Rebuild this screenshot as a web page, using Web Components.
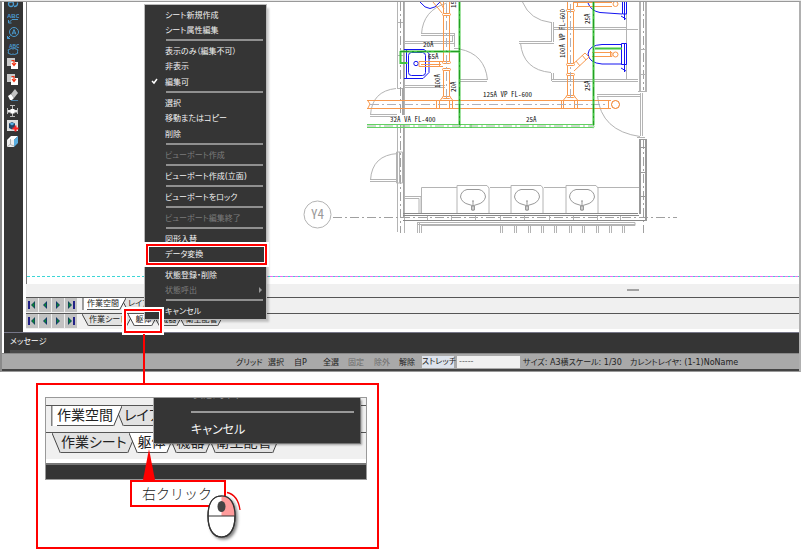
<!DOCTYPE html>
<html lang="ja">
<head>
<meta charset="utf-8">
<title>CAD</title>
<style>
body{margin:0;background:#fff;font-family:"DejaVu Sans","Noto Sans CJK JP",sans-serif;font-size:8px;font-feature-settings:"palt";}
</style>
</head>
<body>
<manual-page></manual-page>
<script>
const define = (name, html, setup) => {
  const t = document.createElement('template');
  t.innerHTML = html;
  customElements.define(name, class extends HTMLElement {
    constructor(){ super(); this.attachShadow({mode:'open'}).append(t.content.cloneNode(true)); }
    connectedCallback(){ if(setup) setup(this, this.shadowRoot); }
  });
};

/* ---------- tool bar ---------- */
const pages = `<path d="M0 0h8v8H0z" fill="#c9c9c9"/><path d="M4 4h7v7H4z" fill="#fff"/><path d="M4.500 2.500h2.500v4M5 5l2 2.500L9 5" stroke="#f03010" stroke-width="1.200" fill="none"/>`;
const leader = `<path d="M2 10.500l3-3h6M1.500 8v3h3" stroke="#4a9bd0" fill="none"/>`;
const tools = {
  '引出':`<g fill="none" stroke="#4a9bd0" stroke-width="1.300"><circle cx="4" cy="8" r="2.500"/><path d="M3 6.500l5-3M7 10.500q4 0 3.500-4"/></g>`,
  '文字引出':`<text x="0" y="6" font-size="6" font-weight="bold" fill="#4a9bd0" font-family="Liberation Sans,sans-serif">ABC</text>${leader}`,
  '記号引出':`<g fill="none" stroke="#4a9bd0"><circle cx="7" cy="5" r="4.500"/><path d="M0.500 11.500l3-3M0.500 9v2.500h2.500M5 7.500l2-5 2 5M6 6h2.500"/></g>`,
  '雲マーク':`<text x="2" y="5" font-size="5" font-weight="bold" fill="#4a9bd0" font-family="Liberation Sans,sans-serif">ABC</text><path d="M3 6q1.500-1 3 0 1.500-1 3 0 3 .5 1.500 2.500 1 2.500-1.500 2.500-1.500 1-3 0-1.500 1-3 0-3-.5-1.500-2.500-1.500-2 1.500-2.500z" stroke="#4a9bd0" fill="none"/>`,
  '前面':pages,'背面':pages,
  '消去':`<path d="M1 7l3-2 3 4-2 2H3z" fill="#fff"/><path d="M4 5l4-5 3 4-4 5z" fill="#c4c4c4"/><path d="M4 11.500h7" stroke="#4a80a8"/>`,
  '接続':`<path d="M0.500 3v6M10.500 3v6M3 .5h5M3 11.500h5M5.500 1v3M5.500 8v3" stroke="#bbb" fill="none"/><path d="M1 5h9v2.500H1z" fill="#e8e8e8"/><path d="M3.500 4h4v4.500h-4z" fill="#fff"/>`,
  '立体':`<path d="M0 0h11v11H0z" fill="#ddd"/><path d="M2 3.500L5 2l3 1.500v4L5 9.500 2 8z" fill="#246"/><path d="M2.500 3.800L5 2.500l2.500 1.300L5 5.500z" fill="#5ab0e4"/><path d="M8.500 5.500v6M5.500 8.500h6" stroke="#f22" stroke-width="2"/>`,
  'ビュー':`<path d="M0 4l4-4h7L7 4z" fill="#fff"/><path d="M7 4l4-4v7l-4 4z" fill="#5aaee0"/><path d="M0 4h7v7H0z" fill="#ededed"/><path d="M3.500 3v5.500L7 10M3.500 8L0 11" stroke="#999" fill="none" stroke-width=".7"/>`
};
define('tool-bar', `<style>
:host{display:block;background:#353535;overflow:hidden}
div{display:flex;flex-direction:column;justify-content:space-between;align-items:center;height:152px;margin-top:-6px;padding-right:1px}
button{all:unset;height:12px;width:12px}
svg{display:block}
</style><div role="toolbar"></div>`, (h,r)=>{
  r.querySelector('div').innerHTML = Object.entries(tools).map(([n,s])=>`<button aria-label="${n}"><svg width="12" height="12">${s}</svg></button>`).join('');
});

/* ---------- plan drawing ---------- */
const basin = x => `<g transform="translate(${x} 197)" fill="none"><path d="M-16 16V-11.500H14L16 -9V16"/><path d="M-6 -7.500H6Q12 -6 12.500 0Q11 6 4 7.500Q0 10 -4 7.500Q-11 6 -12.500 0Q-12 -6 -6 -7.500z" stroke="#999"/><path d="M0 4V14M-1.500 9h3v4h-3zM-1 4h2" stroke="#999"/></g>`;
const pairs = [500,514,528,541,554,569,582,596,609,622].map(x=>`<path d="M${x}.5 226v7M${x+2}.5 226v7"/>`).join('');
const vt = (x,y,s)=>`<text transform="translate(${x} ${y}) rotate(-90)">${s}</text>`;
const coup = (x,y)=>`<rect x="${x-4}" y="${y-1}.5" width="8" height="2" rx="1" fill="#fff"/>`;
define('plan-canvas', `<style>
:host{display:block;background:#fff;overflow:hidden}
svg{display:block;width:100%;height:282px}
text{font-family:"Noto Sans CJK JP",sans-serif;font-feature-settings:"hwid";font-size:7px;fill:#111;stroke:none}
</style><svg role="img" aria-label="平面図"><g transform="translate(-27 -2)" fill="none">
<g stroke="#b4b4b4">
<path d="M397.500 2v86M397.500 124v108M404.500 2v113M404.500 124v109M397 22.500h7M397 55.500h7M397 88.500h7"/><path d="M403.500 2v113M403.500 124v94M402.500 88v27" stroke="#a4a4a4"/>
<path d="M400.500 2v113M400.500 124v109M643.500 2v88M643.500 140v93M333 217.500h344" stroke="#a0a0a0" stroke-dasharray="9 3 2 3"/>
<path d="M404 41.500h49M404 43.500h51M404 85.500h41M404 87.500h41M421 33.500h33M421 35.500h33M452.500 35v7M454.500 33v14M454 48.500h6"/>
<path d="M421.500 34Q423 10 447 3M459.500 49Q485 54 487.500 80M459 79.500h28M459 81.500h28"/>
<path d="M370.500 115Q372 91 396 88.500M370 114.500h27M370 116.500h27M370.500 180Q372 155 398 153.500M370 179.500h27M370 181.500h27M396.500 152v31h6v-31zM399.500 152v31"/>
<path d="M522.500 2Q530 20 551 22.500M551.500 22v20M553.500 22v20M519 41.500h33M519 43.500h35M520.500 43Q523 70 551 72.500M551.500 73v8M553.500 73v6M553 27.500h73M553 29.500h85M552 79.500h86M552 81.500h86M626.500 2v78"/>
<path d="M639.500 2v89M640.500 2v89M645.500 2v89M646.500 2v89M638 91.500h9M639 49.500h7M639 74.500h7M597 94.500h43M597 96.500h43M640.500 93v43M642.500 93v43M597.500 96Q601 131 640 136.500M637 137.500h8"/>
<path d="M404 196.500h17v17M404 198.500h15v15M421.500 213V187.500H457M490 187.500h21M544 187.500h22M598 187.500h41"/>
${basin(473)}${basin(527)}${basin(582)}
<path d="M403 213.500h235M403 215.500h236M403 220.500h244" stroke="#888"/>
<path d="M427.500 216v4M451.500 216v4M475.500 216v4M500.500 216v4M524.500 216v4M549.500 216v4M573.500 216v4M597.500 216v4M620.500 216v4"/>
<path d="M639.500 139v75M640.500 139v75M645.500 139v82M646.500 139v82M639 139.500h8M639 147.500h7M639 172.500h7M639 196.500h7" stroke="#999"/>
<path d="M417 222.500h218v3H421M417.500 222v11M419.500 223v10M421.500 225v8M417 224.500h218"/>${pairs}
<circle cx="317.500" cy="214.500" r="13.500"/>
</g>
<g stroke="#1414f0"><path d="M420 2Q430 15 440 2"/><rect x="408.500" y="52.500" width="17" height="23" rx="3"/><path d="M404 49.500h20l5 4v19l-6 6H404M406.500 49v29" /><circle cx="416" cy="63.500" r="2.200"/>
<path d="M588 3Q591 11 600 12.500L622 14M622.500 2v12h4V2M624.500 2v18M621 16l5 3"/>
<path d="M622 44.500H602Q589 45 588 54q1 9 14 10H622M621.500 43.500h5v21h-5zM624.500 43v29M621 68l5 3"/></g>
<g stroke="#f8994e">
<path d="M433 2l9 11M440 2l4 7M443.500 2v60M449.500 2v60M443.500 68v28l-3 4M449.500 68v28l3 4M443 61.500h-24v5h24M421 64.500h20M439.500 61v6"/>
${coup(446.5,14)}${coup(446.5,62)}${coup(446.5,69)}${coup(446.5,97)}
<path d="M367 100.500h244M367 108.500h244M368 101l2 3-2 4M436.500 100v8M439.500 100v8M449.500 100v8M452.500 100v8M561.500 100v8M563.500 100v8M574.500 100v8M577.500 100v8M608.500 100v8"/><circle cx="615.500" cy="104.500" r="4" stroke="#f07818"/>
<path d="M567.500 2v61M573.500 2v61M567.500 75v20l-4 5M573.500 75v20l4 5M567.500 63v12M571 66l14-13 4 4-15 14M582 55l4 5M576 61l4 5" />
${coup(570.5,10)}${coup(570.5,64)}${coup(570.5,74)}${coup(570.5,96)}
<path d="M574 2.500h38M576 6.500h36M577.500 2v4M592 52.500h20v4h-20M610.500 51v6"/><circle cx="615.500" cy="54.500" r="2.500"/><circle cx="615.500" cy="4" r="2.500"/></g>
<path d="M370 104.500h238M446.500 4v94M570.500 4v94" stroke="#b0b0b8" stroke-dasharray="9 3 2 3"/>
<g stroke="#42c442"><path d="M459.500 2v123M593.500 2v123M400 51.500h60M400.500 51v12h7M595 48.500h27" stroke-width="2"/><path d="M367 124.500h225q2 0 2 2t-2 1H367" stroke="#62d262"/><path d="M459 127l2-3M471 124v4"/><path d="M459.500 2v123M593.500 2v123M400 51.500h60" stroke="#22a022" stroke-dasharray="9 3 2 3"/><path d="M367 126h226" stroke="#9ab89a" stroke-dasharray="9 3 2 3"/></g>
<text x="423" y="47">20A</text><text x="428" y="59">65A</text><text x="483" y="97">125A VP FL-600</text><text x="390" y="122">32A VA FL-400</text><text x="526" y="122">25A</text>
${vt(440,88,'100A')}${vt(456,92,'20A')}${vt(456,8,'15A')}${vt(590,24,'25A')}${vt(590,91,'25A')}${vt(565,58,'100A VP FL-600')}
<text x="311" y="219" style="font-size:13px;fill:#999">Y4</text>
<path d="M27 276.500h773" stroke="#3cd6d6" stroke-dasharray="3 2"/><path d="M183 276.500h617M183.500 2v275" stroke="#f06cf0" stroke-dasharray="3 2" stroke-dashoffset="3"/>
</g></svg>`);

/* ---------- sheet tabs ---------- */
define('sheet-tab', `<style>
:host{display:block;position:relative;margin-left:calc(var(--slant)*-1 + 2px);--fill:#e2e2e2}
:host([active]){z-index:1;--fill:#fff}
:host(:first-of-type){margin-left:0}
button{all:unset;display:flex;height:var(--tab-h);color:#222;white-space:nowrap}
svg{display:block;width:var(--slant);height:100%}
span{background:var(--fill);border-bottom:1px solid #555;box-sizing:border-box;line-height:calc(var(--tab-h) - 1px)}
path{fill:var(--fill);stroke:none} line{stroke:#444}
</style><button role="tab"><svg viewBox="0 0 7 12" preserveAspectRatio="none"><path class="lf" d="M0 0L7 12V0z"/><line x1="0" y1="0" x2="6.500" y2="12" vector-effect="non-scaling-stroke"/></svg><span><slot></slot></span><svg viewBox="0 0 7 12" preserveAspectRatio="none"><path d="M7 0L0 12V0z"/><line x1="7" y1="0" x2=".5" y2="12" vector-effect="non-scaling-stroke"/></svg></button>`, (h,r)=>{
  if(h.hasAttribute('square')){
    r.querySelector('.lf').setAttribute('d','M3 0V12H7V0z');
    const l=r.querySelector('line'); l.setAttribute('x1','3'); l.setAttribute('x2','3');
  }
});
define('sheet-nav', `<style>
:host{display:flex;gap:1px;margin-right:5px}
:host([tight]){margin-right:3px}
button{all:unset;width:12px;height:14px;background:#c2c2c2;display:grid;place-items:center}
</style>
<button aria-label="先頭"><svg width="8" height="8"><path d="M1 0v8" stroke="#228" stroke-width="2"/><path d="M7 0v8L3 4z" fill="#114a5a"/><path d="M6 2v4L4 4z" fill="#0a8a30"/></svg></button>
<button aria-label="前"><svg width="8" height="8"><path d="M6 0v8L2 4z" fill="#123a6a"/><path d="M5 2v4L3 4z" fill="#0a8a30"/></svg></button>
<button aria-label="次"><svg width="8" height="8"><path d="M2 0v8l4-4z" fill="#123a6a"/><path d="M3 2v4l2-2z" fill="#0a8a30"/></svg></button>
<button aria-label="末尾"><svg width="8" height="8"><path d="M7 0v8" stroke="#228" stroke-width="2"/><path d="M1 0v8l4-4z" fill="#114a5a"/><path d="M2 2v4l2-2z" fill="#0a8a30"/></svg></button>`);
define('tab-row', `<style>
:host{display:flex;align-items:flex-start;height:var(--row-h);border-top:1px solid #555;background:#f0f0f0;overflow:hidden}
</style><slot></slot>`);

/* ---------- status bar ---------- */
define('status-bar', `<style>
:host{display:grid;grid-template-columns:32px 26px 29px 25px 26px 25px 23px 32px 66px 107px 1fr;align-items:center;height:15px;padding-left:234px;background:#a9a9a9;border-top:1px solid #888;border-bottom:2px solid #444;color:#222}
button{all:unset;white-space:nowrap}
button:disabled{color:#6c6c6c}
.on{background:#dde3ec;height:12px;line-height:12px;text-align:center}
input{all:unset;box-sizing:border-box;height:12px;width:63px;margin-left:3px;padding-left:2px;background:#f0f0f0;color:#666}
span{white-space:nowrap;padding-left:3px}
</style><button>グリッド</button><button>選択</button><button>自P</button><button>全選</button><button disabled>固定</button><button disabled>除外</button><button>解除</button><button class="on">ストレッチ</button><input aria-label="尺度" value="-----"><span>サイズ: A3横スケール: 1/30</span><span>カレントレイヤ: (1-1)NoName</span>`);

/* ---------- context menu ---------- */
define('menu-item', `<style>
:host{display:block}
button{all:unset;box-sizing:border-box;display:flex;width:100%;align-items:center;height:15px;padding:0 3px 0 20px;color:#f2f2f2;white-space:nowrap}
:host([off]) button{color:#7c7c7c}
svg{display:none}
:host([checked]) .ck{display:block;width:8px;margin:0 6px 0 -14px}
:host([sub]) .ar{display:block;margin-left:auto}
</style><button role="menuitem"><svg class="ck" width="8" height="8"><path d="M1 4l2 2 3-4" stroke="#fff" stroke-width="1.500" fill="none"/></svg><slot></slot><svg class="ar" width="4" height="6"><path d="M0 0l3 3-3 3z" fill="#999"/></svg></button>`);
define('menu-group', `<style>
:host{display:flex;flex-direction:column;justify-content:space-between}
:host(:not(:last-child))::after{content:"";height:2px;margin:2px 3px 2px 21px;background:#909090}
:host([three]){min-height:52px}
</style><slot></slot>`);
define('context-menu', `<style>
:host{display:block;background:#353535;padding:2px 0 1px;box-shadow:0 0 0 1px #bbb,3px 3px 2px #0003}
</style><slot></slot>`);

/* ---------- main window ---------- */
define('cad-window', `<style>
:host{display:grid;isolation:isolate;grid-template-columns:19px 1fr;border:solid #999;border-width:1px 2px 1px 2px;border-left-color:#8a8a8a;border-right-color:#b0b0b0;padding:0 0 0 2px;--tab-h:12px;--slant:7px;--row-h:15px}
.work{border-left:1px solid #fff;padding-left:2px;padding-bottom:3px;min-width:0}
plan-canvas{border-left:1px solid #777}
.grip{height:13px;background:#f0f0f0;display:flex;justify-content:flex-end}
.grip i{width:12px;height:2px;margin:5px 160px 0 0;background:#a2a2a2}
.msg{grid-column:1/-1;background:#353535;border-top:1px solid #778;color:#fff;height:20px;display:flex;flex-direction:column;justify-content:space-between;padding-left:6px}
.msg span{padding-top:3px;line-height:12px}
.msg i{width:30px;height:3px;background:#484848}
status-bar{grid-column:1/-1;margin-left:-2px}
</style>
<tool-bar></tool-bar>
<div class="work"><plan-canvas></plan-canvas><div class="grip"><i></i></div>
<tab-row><sheet-nav tight></sheet-nav><sheet-tab square active>作業空間</sheet-tab><sheet-tab>レイアウト</sheet-tab></tab-row>
<tab-row><sheet-nav></sheet-nav><sheet-tab>作業シート</sheet-tab><sheet-tab active>躯体</sheet-tab><sheet-tab>機器</sheet-tab><sheet-tab>衛生配管</sheet-tab></tab-row></div>
<div class="msg"><span>メッセージ</span><i></i></div>
<status-bar></status-bar>`);

/* ---------- enlarged detail ---------- */
define('detail-view', `<style>
:host{display:block;position:relative;box-sizing:border-box;width:100%;max-width:343px;border:2px solid red;padding:12px 10px 67px 7px}
.shot{position:relative;overflow:hidden;border:1px solid #999;background:#f0f0f0;padding-top:7px;font-size:14px;--tab-h:20px;--slant:9px;--row-h:26px}
tab-row:first-child{padding-left:2px}
tab-row + tab-row{padding-left:6px}
.foot{height:14px;border-top:2px solid #777;background:#353535;margin-top:4px;box-shadow:0 -4px #fff}
.pop{position:absolute;z-index:3;left:108px;top:0;right:6px;height:45px;background:#353535;color:#f4f4f4;box-shadow:2px 2px 2px #0005,0 0 0 1px #aaa;overflow:hidden}
.pop div{padding-left:37px;line-height:20px;font-size:12px}
.pop .cut{color:#888;margin-top:-12px;height:15px;line-height:16px}
.pop hr{margin:10px 6px 7px 37px;border:0;height:2px;background:#999}
.tip{position:absolute;z-index:4;left:92px;top:64px;width:96px}
.tip svg{display:block;margin-left:13px}
.tip p{margin:0;border:2px solid red;background:#fff;color:#222;font:14px/23px "Noto Sans CJK JP",sans-serif;font-weight:300;padding-left:10px;font-feature-settings:normal}
.mouse{position:absolute;z-index:5;left:167px;top:106px}
</style>
<div class="shot">
<tab-row><sheet-tab square active>作業空間</sheet-tab><sheet-tab>レイアウト</sheet-tab></tab-row>
<tab-row><sheet-tab>作業シート</sheet-tab><sheet-tab active>躯体</sheet-tab><sheet-tab>機器</sheet-tab><sheet-tab>衛生配管</sheet-tab></tab-row>
<div class="foot"></div>
<div class="pop"><div class="cut">状態呼出</div><hr><div>キャンセル</div></div>
</div>
<div class="tip"><svg width="12" height="31"><path d="M6 0L12 31H0z" fill="red"/></svg><p>右クリック</p></div>
<svg class="mouse" width="40" height="52"><defs><filter id="s" x="-20%" y="-20%" width="150%" height="150%"><feDropShadow dx="2" dy="2" stdDeviation="1.500" flood-opacity=".5"/></filter></defs>
<g stroke="#333" stroke-width="1.200"><path d="M3 25C3 12 8 5 16.500 5S30 12 30 25 25 46 16.500 46 3 38 3 25z" fill="#fff" filter="url(#s)"/><path d="M16.500 5C25 5 30 12 30 25H16.500z" fill="#ff9c9c" stroke="none"/><path d="M3 25C3 12 8 5 16.500 5S30 12 30 25 25 46 16.500 46 3 38 3 25zM3 25h27" fill="none"/></g><ellipse cx="16.500" cy="15.500" rx="4" ry="5.500" fill="#444"/><path d="M22 1.500Q33 4 35 19" stroke="#f00000" fill="none" stroke-width="1.300"/></svg>`);

/* ---------- page ---------- */
define('manual-page', `<style>
:host{display:flow-root;position:relative}
cad-window{border-radius:0}
.top{height:1px;background:#e8e8e8}
context-menu{position:absolute;left:145px;top:5px;width:121px}
.mark{position:absolute;box-sizing:border-box;border:2px solid red;box-shadow:0 0 0 2px #fff,inset 0 0 0 1px #fff;pointer-events:none}
.item{left:146px;top:244px;width:121px;height:21px}
.tab{left:124px;top:309px;width:38px;height:24px}
.link{width:2px;height:49px;margin:-38px 0 0 143px;background:red;position:relative}
detail-view{margin-left:36px}
</style>
<div class="top"></div>
<cad-window></cad-window>
<context-menu role="menu">
<menu-group><menu-item>シート新規作成</menu-item><menu-item>シート属性編集</menu-item></menu-group>
<menu-group three><menu-item>表示のみ（編集不可）</menu-item><menu-item>非表示</menu-item><menu-item checked>編集可</menu-item></menu-group>
<menu-group three><menu-item>選択</menu-item><menu-item>移動またはコピー</menu-item><menu-item>削除</menu-item></menu-group>
<menu-group><menu-item off>ビューポート作成</menu-item></menu-group>
<menu-group><menu-item>ビューポート作成(立面)</menu-item></menu-group>
<menu-group><menu-item>ビューポートをロック</menu-item></menu-group>
<menu-group><menu-item off>ビューポート編集終了</menu-item></menu-group>
<menu-group><menu-item>図形入替</menu-item><menu-item>データ変換</menu-item></menu-group>
<menu-group><menu-item>状態登録・削除</menu-item><menu-item off sub>状態呼出</menu-item></menu-group>
<menu-group><menu-item>キャンセル</menu-item></menu-group>
</context-menu>
<div class="mark item"></div><div class="mark tab"></div>
<div class="link"></div>
<detail-view></detail-view>`);
</script>
</body>
</html>
